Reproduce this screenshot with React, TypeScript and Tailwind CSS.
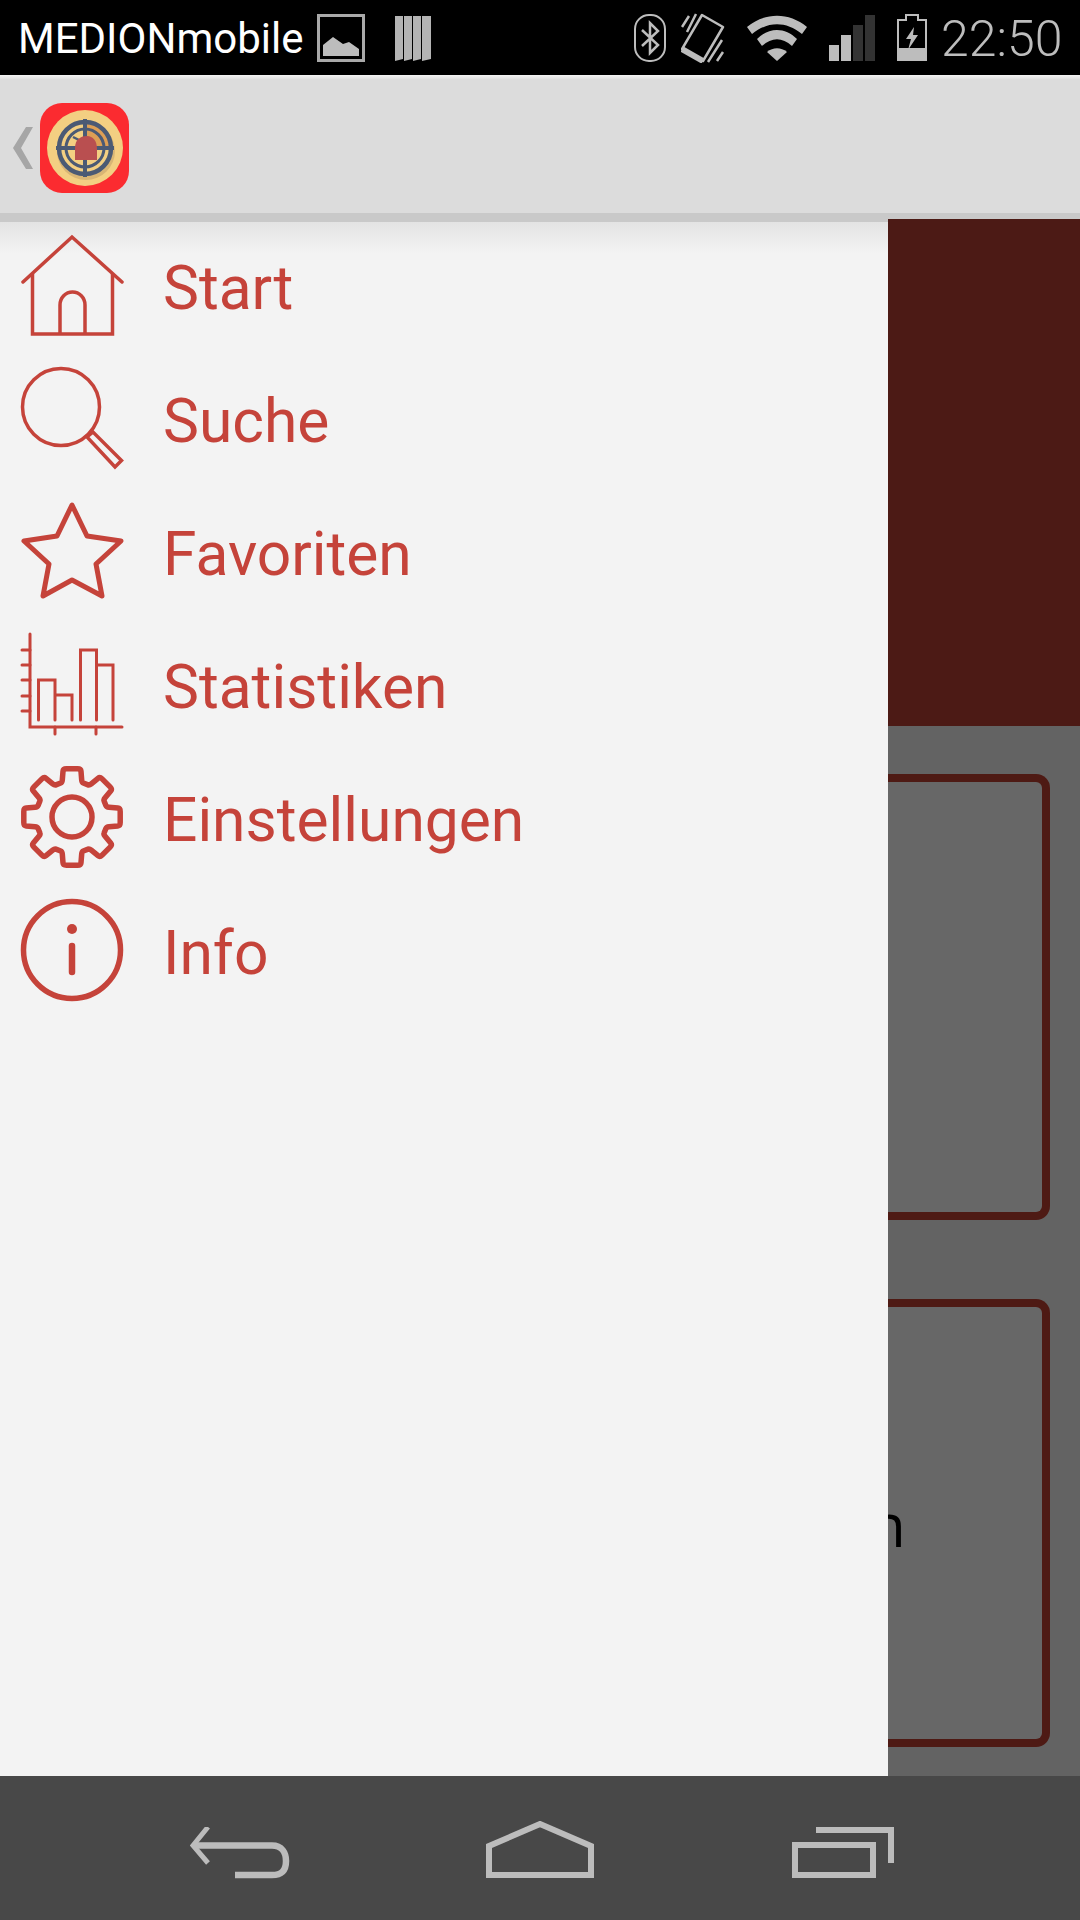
const RED = "#c5433a";

function gearPath() {
    // 8 teeth, first one pointing up, corners rounded off
    const pts: [number, number][] = [];
    for (let i = 0; i < 8; i++) {
        const a = (i * Math.PI) / 4 - Math.PI / 2;
        const at = (r: number, d: number): [number, number] => [52 + r * Math.cos(a + d), 52 + r * Math.sin(a + d)];
        pts.push(at(36, -0.28), at(49, -0.18), at(49, 0.18), at(36, 0.28));
    }
    let d = "";
    pts.forEach((p, i) => {
        const prev = pts[(i + pts.length - 1) % pts.length];
        const next = pts[(i + 1) % pts.length];
        const t = 0.18;
        const s = [p[0] + (prev[0] - p[0]) * t, p[1] + (prev[1] - p[1]) * t];
        const e = [p[0] + (next[0] - p[0]) * t, p[1] + (next[1] - p[1]) * t];
        d += `${i === 0 ? "M" : "L"}${s[0].toFixed(1)} ${s[1].toFixed(1)}Q${p[0].toFixed(1)} ${p[1].toFixed(1)} ${e[0].toFixed(1)} ${e[1].toFixed(1)}`;
    });
    return d + "Z";
}

function HomeIcon() {
    return (
        <svg width="104" height="104" viewBox="0 0 104 104" fill="none" stroke={RED} strokeWidth="3.5">
            <path d="M3 49L52 4L102 49" strokeLinecap="round" />
            <path d="M12.5 41V101H92.5V41" />
            <path d="M40 101V72a12.5 13 0 0 1 25 0V101" />
        </svg>
    );
}

function SearchIcon() {
    return (
        <svg width="104" height="104" viewBox="0 0 104 104" fill="none" stroke={RED} strokeWidth="3.5">
            <circle cx="41" cy="41" r="38.5" />
            <path d="M67 71L73 66L101.500 94.500L95 101Z" />
        </svg>
    );
}

function StarIcon() {
    return (
        <svg width="104" height="104" viewBox="0 0 104 104" fill="none" stroke={RED} strokeWidth="5" strokeLinejoin="round">
            <path d="M52 6L67 37L101 42L76 65L82 97L52 81L23 97L29 65L4 42L37 37Z" />
        </svg>
    );
}

function ChartIcon() {
    return (
        <svg width="104" height="104" viewBox="0 0 104 104" fill="none" stroke={RED} strokeWidth="3" strokeLinecap="round">
            <path d="M10 2V95H102" />
            <path d="M2 18H10M2 33H10M2 48H10M2 64H10M2 79H10M35 95V102M76 95V102" />
            <path d="M18.500 88V48H35V88M35 63H52V88M60.500 88V18H76.500V88M76.500 33H93V88" />
        </svg>
    );
}

function GearIcon() {
    return (
        <svg width="104" height="104" viewBox="0 0 104 104" fill="none" stroke={RED} strokeWidth="5.500" strokeLinejoin="round">
            <path d={gearPath()} />
            <circle cx="52" cy="52" r="20" />
        </svg>
    );
}

function InfoIcon() {
    return (
        <svg width="104" height="104" viewBox="0 0 104 104" fill="none" stroke={RED} strokeWidth="5.500">
            <circle cx="52" cy="52" r="48.500" />
            <circle cx="52" cy="31" r="5" fill={RED} stroke="none" />
            <path d="M52 48V74" strokeWidth="6.500" strokeLinecap="round" />
        </svg>
    );
}

function AppLogo() {
    return (
        <svg width="89" height="90" viewBox="0 0 89 90" className="shrink-0">
            <rect width="89" height="90" rx="22" fill="#fb2b30" />
            <circle cx="45" cy="45" r="38" fill="#f3cf82" />
            <circle cx="46" cy="48" r="29" fill="#d9b574" />
            <circle cx="45" cy="45" r="27" fill="#f3cf82" />
            <path d="M45 45V18A27 27 0 0 1 72 45Z" fill="#dd9f55" />
            <g fill="none" stroke="#4b5a74">
                <circle cx="45" cy="45" r="26" strokeWidth="4.500" />
                <circle cx="45" cy="45" r="19" strokeWidth="3" />
                <path d="M45 16V74M16 45H74" strokeWidth="4" />
                <path d="M33 34L41 38" strokeWidth="2.500" />
            </g>
            <path d="M35 57V45C35 36 41 33 47 33C53 33 57 38 57 46V57Z" fill="#b94f50" />
        </svg>
    );
}

const menu = [
    { label: "Start", icon: <HomeIcon /> },
    { label: "Suche", icon: <SearchIcon /> },
    { label: "Favoriten", icon: <StarIcon /> },
    { label: "Statistiken", icon: <ChartIcon /> },
    { label: "Einstellungen", icon: <GearIcon /> },
    { label: "Info", icon: <InfoIcon /> },
];

function StatusBar() {
    return (
        <div className="flex h-[75px] shrink-0 items-center bg-black pl-[18px]">
            <span className="mt-[3px] w-[299px] text-[42px] leading-none text-white">MEDIONmobile</span>
            {/* picture notification */}
            <svg width="48" height="48" viewBox="0 0 48 48" className="shrink-0">
                <rect x="1.500" y="1.500" width="45" height="45" fill="none" stroke="#a9a9a9" strokeWidth="3" />
                <path d="M6 42V31L16 23L26 30L32 28L42 35V42Z" fill="#bdbdbd" />
            </svg>
            {/* books notification */}
            <svg width="36" height="46" viewBox="0 0 36 46" className="ml-[30px] shrink-0" fill="#b4b4b4">
                <path d="M0 1H8V44L0 46ZM9 1H17V44L9 46ZM18 1H26V44L18 46ZM27 1H36V44L27 46Z" />
            </svg>
            {/* bluetooth */}
            <svg width="32" height="48" viewBox="0 0 32 48" className="ml-[203px] shrink-0" fill="none" stroke="#bdbdbd" strokeWidth="2">
                <rect x="1" y="1" width="30" height="46" rx="14" />
                <path d="M8 16L24 31L16 39V9L24 17L8 32" strokeWidth="2.500" />
            </svg>
            {/* vibrate */}
            <svg width="44" height="50" viewBox="0 0 44 50" className="ml-[15px] shrink-0" fill="none" stroke="#bdbdbd" strokeWidth="2.500">
                <path d="M21 2L42 14L22 48L1 36Z" strokeLinejoin="round" />
                <path d="M1 36L22 48" strokeWidth="6" />
                <path d="M1 14L8 3M6 19L15 1M27 49L41 27M36 48L42 39" />
            </svg>
            {/* wifi */}
            <svg width="60" height="46" viewBox="0 0 60 46" className="ml-[22px] shrink-0" fill="#bdbdbd">
                <path d="M0 12C18 -3 42 -3 60 12L55 19C39 6 21 6 5 19Z" />
                <path d="M10 24C22 12 38 12 50 24L45 31C35 22 25 22 15 31Z" />
                <path d="M20 37C26 32 34 32 40 37L30 46Z" />
            </svg>
            {/* signal */}
            <div className="ml-[22px] flex h-[46px] w-[46px] shrink-0 items-end gap-[2px]">
                <div className="h-[16px] w-[10px] bg-[#bdbdbd]" />
                <div className="h-[26px] w-[10px] bg-[#bdbdbd]" />
                <div className="h-[36px] w-[10px] bg-[#333333]" />
                <div className="h-[46px] w-[10px] bg-[#333333]" />
            </div>
            {/* battery */}
            <svg width="30" height="47" viewBox="0 0 30 47" className="ml-[22px] shrink-0">
                <path d="M1 46V6H9V1H21V6H29V46Z" fill="none" stroke="#bdbdbd" strokeWidth="2" />
                <path d="M0 34H30V47H0Z" fill="#bdbdbd" />
                <path d="M17 13L9 25H14L11 36L21 21H16Z" fill="#bdbdbd" />
            </svg>
            <span className="ml-[14px] mt-[3px] text-[50px] leading-none font-light text-[#bdbdbd]">22:50</span>
        </div>
    );
}

function AppHeader() {
    return (
        <div className="flex h-[138px] shrink-0 items-center bg-[#dcdcdc] bg-[linear-gradient(#f4f4f4,#dcdcdc_5px)] pl-[13px] pt-[7px]">
            <svg width="20" height="42" viewBox="0 0 20 42" className="shrink-0">
                <path d="M20 0H13L0 21L13 42H20L8 21Z" fill="#a6a6a6" />
            </svg>
            <div className="ml-[7px]">
                <AppLogo />
            </div>
        </div>
    );
}

function Drawer() {
    return (
        <div className="flex w-[888px] shrink-0 flex-col">
            <div className="h-[9px] shrink-0 bg-[#c9c9c9]" />
            <div className="flex-1 bg-[#f3f3f3] bg-[linear-gradient(#e3e3e3,#f3f3f3_32px)] pt-[11px]">
                {menu.map((item) => (
                    <div key={item.label} className="flex h-[133px] items-start pl-[20px]">
                        {item.icon}
                        <span className="ml-[39px] mt-[24px] text-[60.5px] leading-[64px] text-[#c5433a]">{item.label}</span>
                    </div>
                ))}
            </div>
        </div>
    );
}

function BackdropColumn() {
    return (
        <div className="flex flex-1 flex-col overflow-hidden">
            <div className="h-[6px] shrink-0 bg-[#c9c9c9]" />
            <div className="h-[507px] shrink-0 bg-[#4c1a15]" />
            <div className="flex flex-1 flex-col gap-[79px] bg-[#636363] pr-[30px] pt-[48px]">
                <div className="h-[446px] rounded-r-[14px] border-8 border-l-0 border-[#4e1a14] bg-[#676767]" />
                <div className="h-[448px] overflow-hidden rounded-r-[14px] border-8 border-l-0 border-[#4e1a14] bg-[#676767] pt-[187px]">
                    <span className="-ml-[19px] block text-[60px] leading-none text-black [font-family:'Open_Sans',sans-serif]">n</span>
                </div>
            </div>
        </div>
    );
}

function NavBar() {
    return (
        <div className="flex h-[144px] shrink-0 items-start bg-[#484848] pl-[190px] pt-[45px]">
            <svg width="100" height="60" viewBox="0 0 100 60" className="mt-[6px] shrink-0" fill="none" stroke="#bcbcbc">
                <path d="M18 0L3 18.500L18 36" strokeWidth="5" strokeLinejoin="miter" />
                <path d="M5 18.500H82C92 18.500 96 26 96 34C96 43 92 48 82 48H45" strokeWidth="6.500" />
            </svg>
            <svg width="108" height="60" viewBox="0 0 108 60" className="ml-[196px] shrink-0" fill="none" stroke="#bcbcbc" strokeWidth="6">
                <path d="M54 3L3 25V54H105V25Z" />
            </svg>
            <svg width="102" height="60" viewBox="0 0 102 60" className="ml-[198px] mt-[6px] shrink-0" fill="none" stroke="#bcbcbc" strokeWidth="6">
                <rect x="3" y="18" width="78" height="30" />
                <path d="M24 3H99V36" />
            </svg>
        </div>
    );
}

export default function App() {
    return (
        <div className="flex h-[1920px] w-[1080px] flex-col overflow-hidden font-['Roboto',sans-serif]">
            <StatusBar />
            <AppHeader />
            <div className="flex min-h-0 flex-1">
                <Drawer />
                <BackdropColumn />
            </div>
            <NavBar />
        </div>
    );
}
